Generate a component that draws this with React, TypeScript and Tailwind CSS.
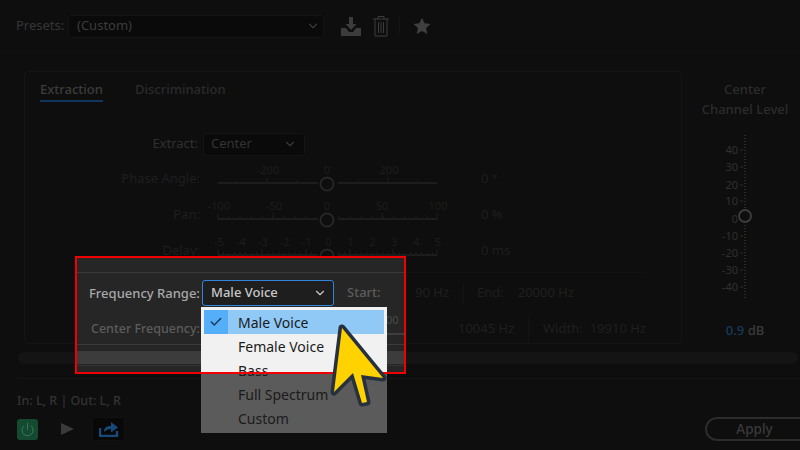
import { Check, ChevronDown, Power } from "lucide-react"
import React from "react"

const range = (from: number, to: number, step: number) => {
  const out: number[] = []
  for (let x = from; x <= to + 0.01; x += step) out.push(x)
  return out
}

type Mark = { x: number; label: string }

// svg coords: x is page x minus 206, track sits at y=27
const Scale = ({
  marks,
  minor,
  major,
  color = "#1d1d1d",
}: {
  marks: Mark[]
  minor: number[]
  major: number[]
  color?: string
}) => (
  <svg width="240" height="36" className="block shrink-0 overflow-visible">
    {marks.map((m) => (
      <text key={m.label} x={m.x - 206} y="18" textAnchor="middle" fontSize="11" fill={color}>
        {m.label}
      </text>
    ))}
    <path d="M11 27H111M131 27H230" stroke={color} strokeWidth="2" />
    {minor.map((x) => (
      <path key={x} d={`M${x - 206} 27v-3`} stroke={color} />
    ))}
    {major.map((x) => (
      <path key={x} d={`M${x - 206} 27v-6`} stroke={color} />
    ))}
    <circle cx="120" cy="28" r="6.5" fill="none" stroke="#262626" strokeWidth="2" />
  </svg>
)

const SliderRow = ({
  label,
  value,
  children,
}: {
  label: string
  value: string
  children: React.ReactNode
}) => (
  <div className="flex items-end h-[36px]">
    <span className="w-[175px] text-right text-[#1e1e1e] leading-[18px] mb-[5px]">{label}</span>
    <span className="w-[7px]" />
    {children}
    <span className="ml-[34px] text-[#1e1e1e] leading-[18px] mb-[5px]">{value}</span>
  </div>
)

const channelTicks = [
  ["40", 150],
  ["30", 167],
  ["20", 185],
  ["10", 201],
  ["0", 219],
  ["-10", 236],
  ["-20", 253],
  ["-30", 270],
  ["-40", 287],
] as const

const ChannelSlider = () => (
  <svg width="60" height="172" className="block overflow-visible">
    <path d="M33 0V165" stroke="#2a2a2a" strokeDasharray="1 2" strokeWidth="2" />
    {channelTicks.map(([label, y]) => (
      <g key={label}>
        <text x="26" y={y - 134} textAnchor="end" fontSize="11" fill="#303030" dominantBaseline="middle">
          {label}
        </text>
        <path d={`M28 ${y - 135}h3`} stroke="#2a2a2a" />
      </g>
    ))}
    <circle cx="33" cy="81" r="8" fill="#0e0e0e" />
    <circle cx="33" cy="81" r="6" fill="none" stroke="#3c3c3c" strokeWidth="2" />
  </svg>
)

const menuItems = ["Male Voice", "Female Voice", "Bass", "Full Spectrum", "Custom"]

export default function App() {
  return (
    <div className="relative w-[800px] h-[450px] overflow-hidden bg-[#0e0e0e] text-[13px] font-['Noto_Sans',sans-serif]">
      {/* dimmed dialog */}
      <div className="flex flex-col h-full">
        <div className="flex items-center h-[22px] mt-[15px] pl-[16px]">
          <span className="w-[52px] text-[#363636]">Presets:</span>
          <div className="w-[256px] h-[23px] flex items-center justify-between pl-[8px] pr-[3px] rounded-[3px] border border-[#141414] bg-[#0a0a0a]">
            <span className="text-[#3c3c3c]">(Custom)</span>
            <ChevronDown size={14} color="#3a3a3a" />
          </div>
          <svg width="22" height="20" viewBox="0 0 22 20" className="ml-[16px]">
            <path d="M1 12h5l3 4h4l3-4h5v8H1z" fill="#3c3c3c" />
            <path d="M9 1h4v7h3.5L11 14 5.5 8H9z" fill="#3c3c3c" />
          </svg>
          <svg width="18" height="22" viewBox="0 0 18 22" className="ml-[10px]" fill="none" stroke="#3c3c3c">
            <path d="M1 4h16M6 4V1.5h6V4M3 4v17h12V4M6.5 7v11M9 7v11M11.5 7v11" />
          </svg>
          <div className="ml-[9px] w-px h-[18px] bg-[#141414]" />
          <svg width="18" height="18" viewBox="0 0 24 24" className="ml-[13px]" fill="#3f3f3f">
            <path d="M12 1l3.4 7.4 8 .9-6 5.4 1.7 8L12 18.8 4.900 22.700l1.700-8-6-5.400 8-.9z" />
          </svg>
        </div>
        <div className="h-px bg-[#121212] mt-[14px]" />

        <div className="flex mt-[19px]">
          <div className="ml-[24px] w-[658px] h-[273px] rounded-[4px] border border-[#141414] pt-[8px]">
            <div className="flex pl-[15px] gap-[32px] font-medium">
              <div className="h-[22px] border-b-2 border-[#12365a] text-[#3c3c3c]">Extraction</div>
              <div className="h-[22px] text-[#2a2a2a]">Discrimination</div>
            </div>
            <div className="flex items-center mt-[30px] h-[24px]">
              <span className="w-[173px] text-right text-[#303030]">Extract:</span>
              <span className="w-[5px]" />
              <div className="w-[102px] h-[23px] flex items-center justify-between pl-[7px] pr-[7px] rounded-[3px] border border-[#141414] bg-[#0a0a0a]">
                <span className="text-[#333]">Center</span>
                <ChevronDown size={14} color="#3a3a3a" />
              </div>
            </div>
            <div>
              <SliderRow label="Phase Angle:" value="0 °">
                <Scale
                  marks={[
                    { x: 267, label: "-200" },
                    { x: 326, label: "0" },
                    { x: 388, label: "200" },
                  ]}
                  minor={[236, 296, 357, 417]}
                  major={[266, 387]}
                />
              </SliderRow>
              <SliderRow label="Pan:" value="0 %">
                <Scale
                  marks={[
                    { x: 218, label: "-100" },
                    { x: 273, label: "-50" },
                    { x: 326, label: "0" },
                    { x: 381, label: "50" },
                    { x: 437, label: "100" },
                  ]}
                  minor={range(217, 436, 11).filter((x) => x < 316 || x > 336)}
                  major={[217, 272, 381, 436]}
                />
              </SliderRow>
              <SliderRow label="Delay:" value="0 ms">
                <Scale
                  marks={["-5", "-4", "-3", "-2", "-1", "0", "1", "2", "3", "4", "5"].map((label, i) => ({
                    x: 218 + i * 21.9,
                    label,
                  }))}
                  minor={range(217, 436, 5.5).filter((x) => x < 316 || x > 336)}
                  major={[217, 261, 305, 349, 392, 436]}
                />
              </SliderRow>
            </div>
            <div className="h-px bg-[#131313] ml-[52px] mt-[8px] w-[568px]" />
            <div className="flex items-center h-[36px] mt-[2px] ml-[376px] text-[#1f1f1f] whitespace-nowrap">
              <span className="w-[38px] ml-[10px] text-right">90 Hz</span>
              <div className="w-px h-[22px] bg-[#131313] ml-[14px]" />
              <span className="ml-[13px]">End:</span>
              <span className="ml-[14px]">20000 Hz</span>
            </div>
            <div className="flex items-center h-[36px] ml-[433px] text-[#1f1f1f] whitespace-nowrap">
              <span className="w-[56px] text-right">10045 Hz</span>
              <div className="w-px h-[28px] bg-[#131313] ml-[14px]" />
              <span className="ml-[14px]">Width:</span>
              <span className="ml-[7px]">19910 Hz</span>
            </div>
          </div>

          <div className="flex-1 flex flex-col items-center pl-[8px] pt-[8px] text-[#2c2c2c] leading-[20px]">
            <span className="font-medium">Center</span>
            <span className="font-medium">Channel Level</span>
            <div className="mt-[16px] pr-[6px]">
              <ChannelSlider />
            </div>
            <div className="mt-[13px] font-medium">
              <span className="text-[#173a5c]">0.9</span> <span className="text-[#3a3a3a]">dB</span>
            </div>
          </div>
        </div>

        <div className="mt-[8px] h-[12px] ml-[18px] w-[780px] rounded-full bg-[#141414]" />
        <div className="h-px bg-[#141414] mt-[14px] ml-[18px]" />
        <div className="mt-[13px] pl-[17px] text-[12.500px] font-medium text-[#333] leading-[18px]">In: L, R | Out: L, R</div>
        <div className="flex items-center mt-[7px] pl-[17px]">
          <div className="w-[21px] h-[21px] rounded-[3px] bg-[#134a30] flex items-center justify-center">
            <Power size={15} color="#3f7a5c" strokeWidth={1.5} />
          </div>
          <svg width="16" height="14" viewBox="0 0 16 14" className="ml-[22px]">
            <path d="M1 1l13 6-13 6z" fill="#3a3a3a" />
          </svg>
          <div className="ml-[16px] w-[33px] h-[24px] rounded-[3px] bg-[#080808] border border-[#111] flex items-center justify-center">
            <svg width="20" height="16" viewBox="0 0 20 16" fill="none">
              <path d="M1 7v8h17v-5" stroke="#17497a" strokeWidth="2.500" />
              <path d="M5 11c0-4 2-6 7-6V1l7 5.500-7 5V8c-3 0-5 1-7 3z" fill="#17497a" />
            </svg>
          </div>
          <div className="ml-auto mr-[-20px] w-[115px] h-[24px] rounded-full border-2 border-[#2c2c2c] flex items-center justify-center pr-[16px] font-medium text-[#3a3a3a] text-[13.500px]">
            Apply
          </div>
        </div>
      </div>

      {/* highlighted region */}
      <div className="absolute left-[75px] top-[256px] w-[331px] h-[118px] overflow-hidden border-2 border-[#f00000] bg-[#262626]">
        <div className="h-px bg-[#3a3a3a] mt-[14px]" />
        <div className="flex items-center h-[26px] mt-[7px] pl-[12px]">
          <span className="w-[113px] pt-[2px] font-medium text-[#a8a8a8]">Frequency Range:</span>
          <div className="w-[132px] h-[26px] flex items-center justify-between pl-[8px] pr-[6px] rounded-[3px] border border-[#2f86dc] bg-[#1e1e1e]">
            <span className="text-[#c8c8c8] font-medium">Male Voice</span>
            <ChevronDown size={14} color="#c8c8c8" />
          </div>
          <span className="ml-[13px] font-medium text-[#5c5c5c]">Start:</span>
        </div>
        <div className="flex items-center h-[28px] mt-[9px] pl-[14px] font-medium text-[12.500px] text-[#5c5c5c]">Center Frequency:</div>
        <div className="h-px bg-[#3c3c3c] mt-[1px]" />
        <div className="h-[13px] bg-[#3c3c3c] mt-[6px]" />
        <div className="h-px bg-[#333] mt-[1px]" />
      </div>
      <svg width="18" height="24" className="absolute left-[387px] top-[312px]">
        <text x="-1" y="12" fontSize="11" fill="#4a4a4a">00</text>
        <path d="M0 22H18" stroke="#555" strokeWidth="1" />
      </svg>

      {/* open dropdown */}
      <div className="absolute left-[201px] top-[307px] w-[186px] h-[126px] pt-[3px] px-[3px] bg-[linear-gradient(#f1f1f1_0_66px,#5b5b5b_66px)] text-[#1a1a1a] text-[14px]">
        {menuItems.map((item, i) => (
          <div key={item} className={`flex items-center h-[24px] ${i === 0 ? "bg-[#90c8f6]" : ""}`}>
            <span className={`w-[24px] h-[24px] flex items-center justify-center ${i === 0 ? "bg-[#54aef8]" : ""}`}>
              {i === 0 && <Check size={14} color="#1c3a55" strokeWidth={2.5} />}
            </span>
            <span className="ml-[10px]">{item}</span>
          </div>
        ))}
      </div>
      <div className="absolute left-[201px] top-[372px] w-[205px] h-[2px] bg-[#f00000]" />

      {/* pointer arrow */}
      <svg width="64" height="96" viewBox="0 0 64 96" className="absolute left-[328px] top-[322px]">
        <path
          d="M14 6L55 56 33 53 39 80 34 81 25 51 6 70z"
          fill="#ffd200"
          stroke="#27303f"
          strokeWidth="7"
          strokeLinejoin="round"
          paintOrder="stroke"
        />
      </svg>
    </div>
  )
}
